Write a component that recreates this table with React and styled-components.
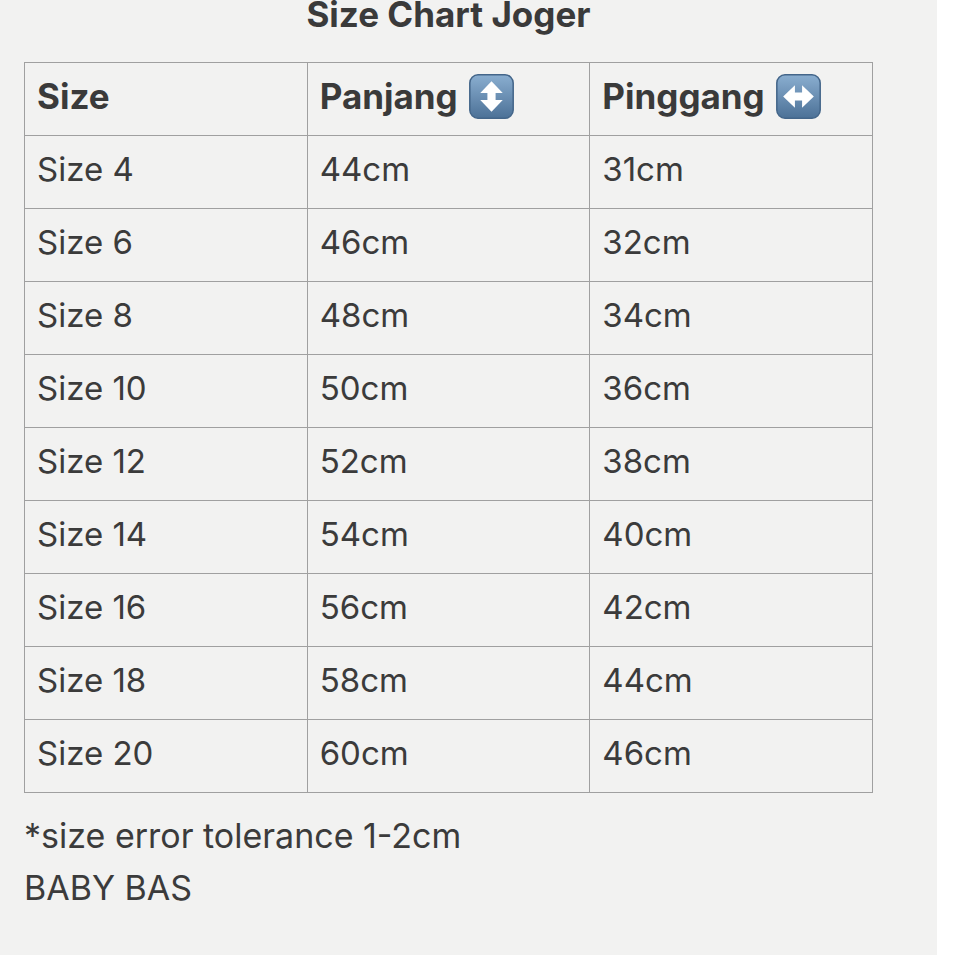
import React from 'react';
import styled, { createGlobalStyle } from 'styled-components';

const GlobalStyle = createGlobalStyle`
    html, body {
        margin: 0;
        padding: 0;
        background: #ffffff;
    }
    body {
        font-family: Inter, "Liberation Sans", Arial, sans-serif;
        color: #3b3b3b;
    }
`;

const rows = [
    ['Size 4', '44cm', '31cm'],
    ['Size 6', '46cm', '32cm'],
    ['Size 8', '48cm', '34cm'],
    ['Size 10', '50cm', '36cm'],
    ['Size 12', '52cm', '38cm'],
    ['Size 14', '54cm', '40cm'],
    ['Size 16', '56cm', '42cm'],
    ['Size 18', '58cm', '44cm'],
    ['Size 20', '60cm', '46cm'],
];

const ArrowIcon = ({ dir }) => {
    const points = dir === 'vertical'
        ? '22,7 33,18.5 26,18.5 26,25.5 33,25.5 22,37 11,25.5 18,25.5 18,18.5 11,18.5'
        : '7,22 18.5,11 18.5,18 25.5,18 25.5,11 37,22 25.5,33 25.5,26 18.5,26 18.5,33';
    const id = 'grad-' + dir;
    return (
        <svg width="45" height="45" viewBox="0 0 44 44">
            <defs>
                <linearGradient id={id} x1="0" y1="0" x2="0" y2="1">
                    <stop offset="0" stopColor="#8aaed0" />
                    <stop offset="1" stopColor="#4c7197" />
                </linearGradient>
            </defs>
            <rect x="0.8" y="0.8" width="42.4" height="42.4" rx="8" fill={`url(#${id})`} stroke="#44668a" strokeWidth="1.5" />
            <polygon points={points} fill="#ffffff" />
        </svg>
    );
};

const SizeChart = () => {
    return (
        <Pagina>
            <Titulo>Size Chart Joger</Titulo>
            <Tabla>
                <thead>
                    <tr>
                        <th>Size</th>
                        <th>
                            <Cabecera>Panjang <ArrowIcon dir="vertical" /></Cabecera>
                        </th>
                        <th>
                            <Cabecera>Pinggang <ArrowIcon dir="horizontal" /></Cabecera>
                        </th>
                    </tr>
                </thead>
                <tbody>
                    {rows.map(r => (
                        <tr key={r[0]}>
                            <td>{r[0]}</td>
                            <td>{r[1]}</td>
                            <td>{r[2]}</td>
                        </tr>
                    ))}
                </tbody>
            </Tabla>
            <Nota>
                *size error tolerance 1-2cm<br />
                BABY BAS
            </Nota>
        </Pagina>
    );
}

const Pagina = styled.div`
    width: 937px;
    min-height: 955px;
    box-sizing: border-box;
    background: #f2f2f1;
    padding: 0 0 0 24px;
    overflow: hidden;
`;

const Titulo = styled.h1`
    margin: -2px 0 0 0;
    width: 849px;
    text-align: center;
    font-size: 35px;
    line-height: 32px;
    font-weight: 700;
    color: #3a3a3a;
`;

const Tabla = styled.table`
    margin-top: 32px;
    width: 849px;
    border-collapse: collapse;
    table-layout: fixed;

    th, td {
        height: 73px;
        padding: 0 12px 6px 12px;
        border: 1px solid #a0a0a0;
        text-align: left;
        vertical-align: middle;
        color: #3b3b3b;
        box-sizing: border-box;
    }
    th {
        font-size: 35px;
        font-weight: 700;
        color: #3a3a3a;
    }
    td {
        font-size: 33px;
        font-weight: 400;
    }
`;

const Cabecera = styled.span`
    display: inline-flex;
    align-items: center;
    gap: 11px;
`;

const Nota = styled.p`
    margin: 17px 0 0 0;
    font-size: 34px;
    line-height: 52px;
    color: #3b3b3b;
`;

export default function App() {
    return (
        <>
            <GlobalStyle />
            <SizeChart />
        </>
    );
}
